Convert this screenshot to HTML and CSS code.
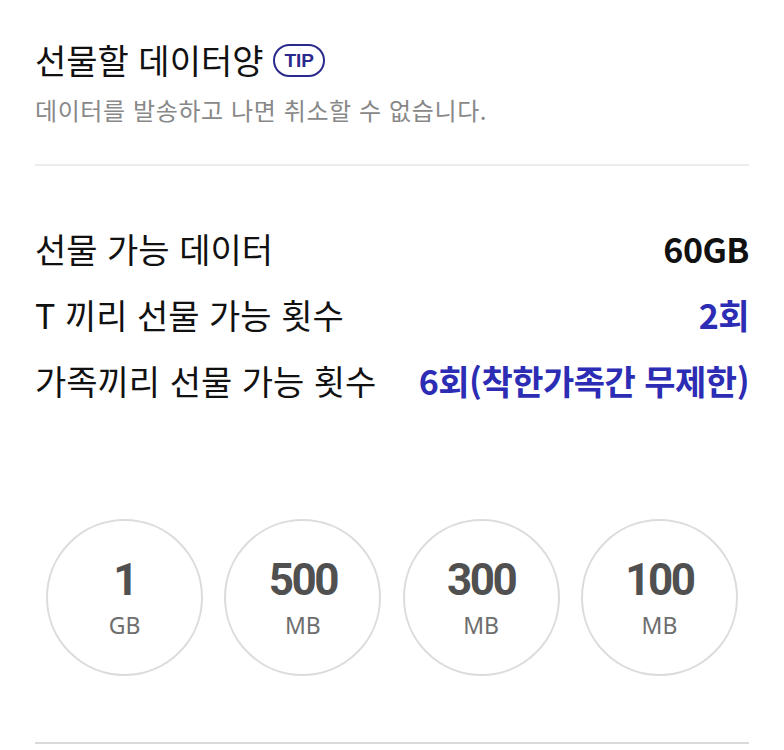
FILE: index.html
```html
<!DOCTYPE html>
<html lang="ko">
<head>
  <meta charset="UTF-8">
  <title>선물할 데이터양</title>
  <link rel="stylesheet" href="styles.css">
</head>
<body>
  <div class="page">
    <div class="head">
      <h1>선물할 데이터양 <span class="tip">TIP</span></h1>
      <p class="sub">데이터를 발송하고 나면 취소할 수 없습니다.</p>
    </div>

    <div class="info">
      <div class="row">
        <span class="label">선물 가능 데이터</span>
        <span class="value">60GB</span>
      </div>
      <div class="row">
        <span class="label">T 끼리 선물 가능 횟수</span>
        <span class="value blue">2회</span>
      </div>
      <div class="row">
        <span class="label">가족끼리 선물 가능 횟수</span>
        <span class="value blue">6회(착한가족간 무제한)</span>
      </div>
    </div>

    <div class="amounts">
      <button class="amount"><b>1</b><span>GB</span></button>
      <button class="amount"><b>500</b><span>MB</span></button>
      <button class="amount"><b>300</b><span>MB</span></button>
      <button class="amount"><b>100</b><span>MB</span></button>
    </div>
  </div>
</body>
</html>
```

FILE: styles.css
```css
body {
  margin: 0;
  background: #fff;
  font-family: "Noto Sans CJK KR", "Noto Sans", sans-serif;
  color: #111;
}

.page {
  padding: 0 35px;
}

.head {
  padding-top: 38px;
  padding-bottom: 38px;
  border-bottom: 2px solid #ececec;
}

.head h1 {
  margin: 0;
  font-size: 34px;
  font-weight: 400;
  line-height: 44px;
  display: flex;
  align-items: center;
}

.tip {
  display: inline-block;
  margin-left: 10px;
  padding: 0 9px;
  height: 29px;
  line-height: 29px;
  border: 2px solid #2a2a8c;
  border-radius: 17px;
  color: #2a2a8c;
  font-family: "Liberation Sans", sans-serif;
  font-size: 19px;
  font-weight: 700;
}

.sub {
  margin: 12px 0 0;
  font-size: 24px;
  line-height: 32px;
  color: #888;
  letter-spacing: 0.6px;
}

.info {
  padding-top: 49px;
}

.row {
  display: flex;
  justify-content: space-between;
  align-items: center;
  height: 66px;
  font-size: 34px;
}

.value {
  font-weight: 700;
  color: #111;
  letter-spacing: -0.5px;
}

.value.blue {
  color: #2c2cb4;
}

.amounts {
  display: flex;
  justify-content: space-between;
  padding: 106px 11px 66px;
  border-bottom: 2px solid #d9d9d9;
}

.amount {
  width: 157px;
  height: 157px;
  border-radius: 50%;
  border: 2px solid #dcdcdc;
  background: #fff;
  display: flex;
  flex-direction: column;
  align-items: center;
  justify-content: center;
  padding: 0;
  font-family: "Noto Sans", sans-serif;
  cursor: pointer;
}

.amount b {
  font-family: Roboto, sans-serif;
  font-size: 44px;
  line-height: 46px;
  font-weight: 700;
  color: #505050;
  letter-spacing: -2.5px;
}

.amount span {
  margin-top: 8px;
  font-size: 23px;
  line-height: 28px;
  color: #6e6e6e;
}
```
